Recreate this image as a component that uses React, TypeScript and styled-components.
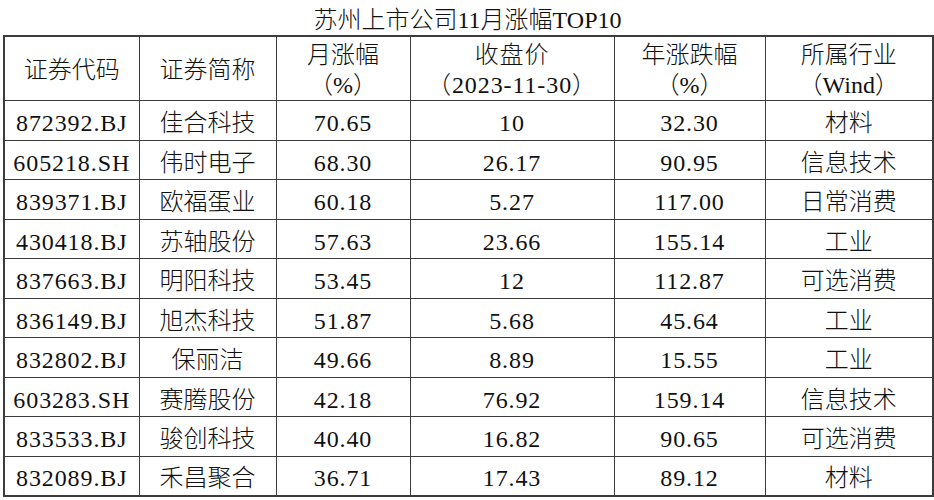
import React from "react";
import styled, { createGlobalStyle } from "styled-components";

const GlobalStyle = createGlobalStyle`
  body {
    margin: 0;
    background: #ffffff;
  }
`;

const Page = styled.div`
  width: 934px;
  padding-left: 3px;
  box-sizing: border-box;
  font-family: "Liberation Serif", "Noto Sans CJK SC", serif;
  font-weight: 300;
  color: #111;
`;

const Title = styled.div`
  width: 929px;
  height: 35px;
  box-sizing: border-box;
  padding-top: 5px;
  line-height: 30px;
  font-size: 24px;
  text-align: center;
`;

const TableComponent = styled.table`
  width: 929px;
  border-collapse: collapse;
  table-layout: fixed;
  border: 2px solid #3c3c3c;
  font-size: 24px;
`;

const HeaderRow = styled.tr`
  > td {
    height: 63px;
    line-height: 30px;
    padding-top: 3px;
  }
`;

const Row = styled.tr`
  > td {
    height: 40px;
    line-height: 28px;
    padding-top: 5px;
  }
  &:nth-child(2n) > td {
    height: 39px;
  }
`;

const Cell = styled.td<{ num?: boolean }>`
  border: 1px solid #3c3c3c;
  padding: 0;
  text-align: center;
  vertical-align: middle;
  white-space: nowrap;
  box-sizing: border-box;
  letter-spacing: ${(props) => (props.num ? "0.9px" : "0")};
`;

const widths = [135, 137, 134, 204, 151, 168];

type Stock = {
  code: string;
  name: string;
  month: string;
  close: string;
  year: string;
  industry: string;
};

const data: Stock[] = [
  { code: "872392.BJ", name: "佳合科技", month: "70.65", close: "10", year: "32.30", industry: "材料" },
  { code: "605218.SH", name: "伟时电子", month: "68.30", close: "26.17", year: "90.95", industry: "信息技术" },
  { code: "839371.BJ", name: "欧福蛋业", month: "60.18", close: "5.27", year: "117.00", industry: "日常消费" },
  { code: "430418.BJ", name: "苏轴股份", month: "57.63", close: "23.66", year: "155.14", industry: "工业" },
  { code: "837663.BJ", name: "明阳科技", month: "53.45", close: "12", year: "112.87", industry: "可选消费" },
  { code: "836149.BJ", name: "旭杰科技", month: "51.87", close: "5.68", year: "45.64", industry: "工业" },
  { code: "832802.BJ", name: "保丽洁", month: "49.66", close: "8.89", year: "15.55", industry: "工业" },
  { code: "603283.SH", name: "赛腾股份", month: "42.18", close: "76.92", year: "159.14", industry: "信息技术" },
  { code: "833533.BJ", name: "骏创科技", month: "40.40", close: "16.82", year: "90.65", industry: "可选消费" },
  { code: "832089.BJ", name: "禾昌聚合", month: "36.71", close: "17.43", year: "89.12", industry: "材料" },
];

export default function App() {
  return (
    <Page>
      <GlobalStyle />
      <Title>苏州上市公司11月涨幅TOP10</Title>
      <TableComponent>
        <colgroup>
          {widths.map((w, i) => (
            <col key={i} style={{ width: w }} />
          ))}
        </colgroup>
        <thead>
          <HeaderRow>
            <Cell>证券代码</Cell>
            <Cell>证券简称</Cell>
            <Cell>
              月涨幅
              <br />
              （%）
            </Cell>
            <Cell num>
              收盘价
              <br />
              （2023-11-30）
            </Cell>
            <Cell>
              年涨跌幅
              <br />
              （%）
            </Cell>
            <Cell>
              所属行业
              <br />
              （Wind）
            </Cell>
          </HeaderRow>
        </thead>
        <tbody>
          {data.map((s) => (
            <Row key={s.code}>
              <Cell num>{s.code}</Cell>
              <Cell>{s.name}</Cell>
              <Cell num>{s.month}</Cell>
              <Cell num>{s.close}</Cell>
              <Cell num>{s.year}</Cell>
              <Cell>{s.industry}</Cell>
            </Row>
          ))}
        </tbody>
      </TableComponent>
    </Page>
  );
}
